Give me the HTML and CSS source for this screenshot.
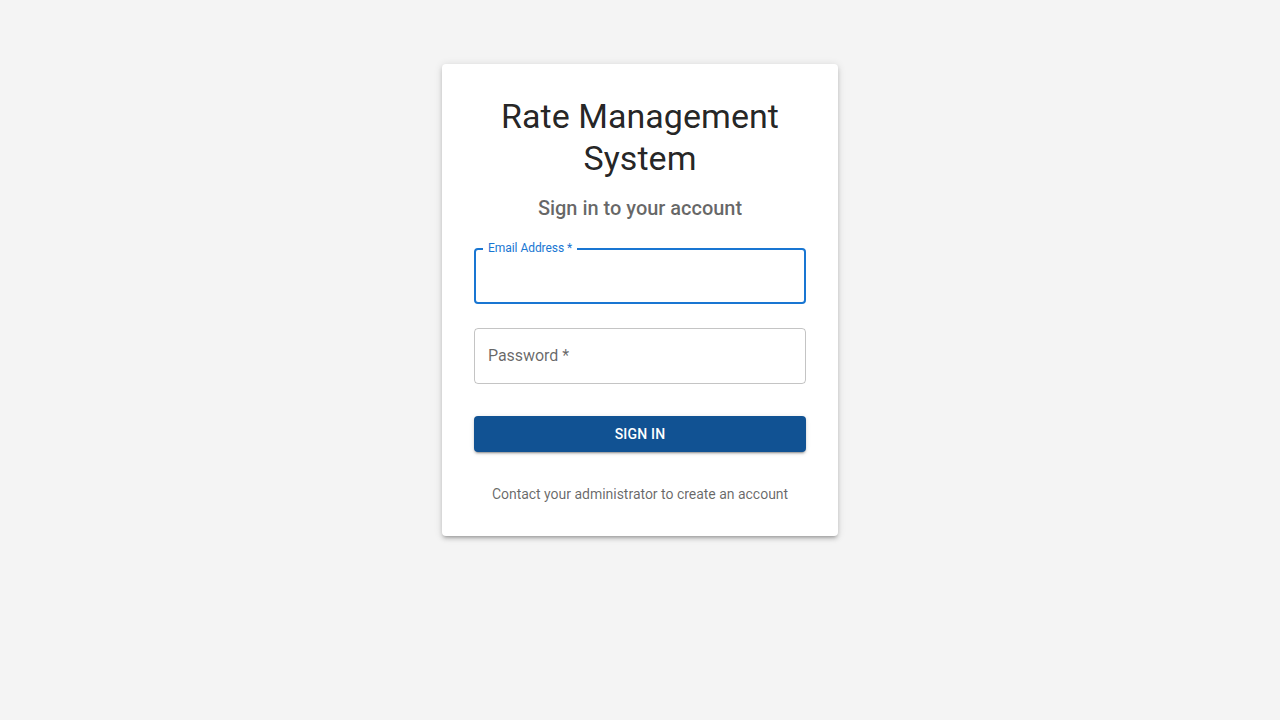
FILE: index.html
```html
<!DOCTYPE html>
<html lang="en">
<head>
<meta charset="utf-8">
<title>Rate Management System</title>
<link rel="stylesheet" href="styles.css">
</head>
<body>
<main class="page">
  <section class="card">
    <h1 class="title">Rate Management System</h1>
    <h2 class="subtitle">Sign in to your account</h2>
    <form class="form">
      <div class="field field-focused">
        <label class="float-label" for="email">Email Address *</label>
        <input class="input" id="email" type="email">
      </div>
      <div class="field">
        <label class="rest-label" for="password">Password *</label>
        <input class="input" id="password" type="password">
      </div>
      <button class="btn" type="button">Sign In</button>
    </form>
    <p class="note">Contact your administrator to create an account</p>
  </section>
</main>
</body>
</html>
```
FILE: styles.css
```css
* { box-sizing: border-box; }
html, body { margin: 0; padding: 0; }
body {
  background: #f4f4f4;
  font-family: Roboto, "Noto Sans", Arial, sans-serif;
  color: rgba(0, 0, 0, 0.87);
  width: 1280px;
  height: 720px;
}
.page {
  display: flex;
  justify-content: center;
  padding-top: 64px;
}
.card {
  width: 396px;
  background: #fff;
  border-radius: 4px;
  padding: 31px 32px 32px;
  box-shadow: 0px 3px 3px -2px rgba(0,0,0,0.2), 0px 3px 4px 0px rgba(0,0,0,0.14), 0px 1px 8px 0px rgba(0,0,0,0.12);
  text-align: center;
}
.title {
  margin: 0 0 13px;
  font-size: 34px;
  font-weight: 400;
  line-height: 42px;
  letter-spacing: 0.05px;
  color: rgba(0, 0, 0, 0.87);
}
.subtitle {
  margin: 0 0 24px;
  font-size: 20px;
  font-weight: 500;
  line-height: 32px;
  letter-spacing: -0.02px;
  color: rgba(0, 0, 0, 0.6);
}
.form {
  display: flex;
  flex-direction: column;
  margin: 0;
}
.field {
  position: relative;
  height: 56px;
  border: 1px solid rgba(0, 0, 0, 0.23);
  border-radius: 4px;
  margin-bottom: 24px;
  text-align: left;
}
.field-focused {
  border: 2px solid #1976d2;
}
.float-label {
  position: absolute;
  top: -9px;
  left: 7px;
  padding: 0 5px;
  background: #fff;
  font-size: 12px;
  line-height: 14px;
  color: #1976d2;
  letter-spacing: -0.05px;
}
.rest-label {
  position: absolute;
  top: 17px;
  left: 13px;
  font-size: 16px;
  line-height: 20px;
  color: rgba(0, 0, 0, 0.6);
  letter-spacing: -0.05px;
}
.input {
  width: 100%;
  height: 100%;
  border: 0;
  outline: none;
  background: transparent;
  padding: 16px 14px;
  font: inherit;
  font-size: 16px;
}
.btn {
  margin-top: 8px;
  height: 36px;
  border: 0;
  border-radius: 4px;
  background: #115293;
  color: #fff;
  font-family: Roboto, "Noto Sans", Arial, sans-serif;
  font-size: 14px;
  font-weight: 500;
  letter-spacing: 0.2px;
  text-transform: uppercase;
  box-shadow: 0px 3px 1px -2px rgba(0,0,0,0.2), 0px 2px 2px 0px rgba(0,0,0,0.14), 0px 1px 5px 0px rgba(0,0,0,0.12);
  cursor: pointer;
}
.note {
  margin: 32px 0 0;
  font-size: 14px;
  line-height: 20px;
  letter-spacing: -0.02px;
  color: rgba(0, 0, 0, 0.6);
}
```
